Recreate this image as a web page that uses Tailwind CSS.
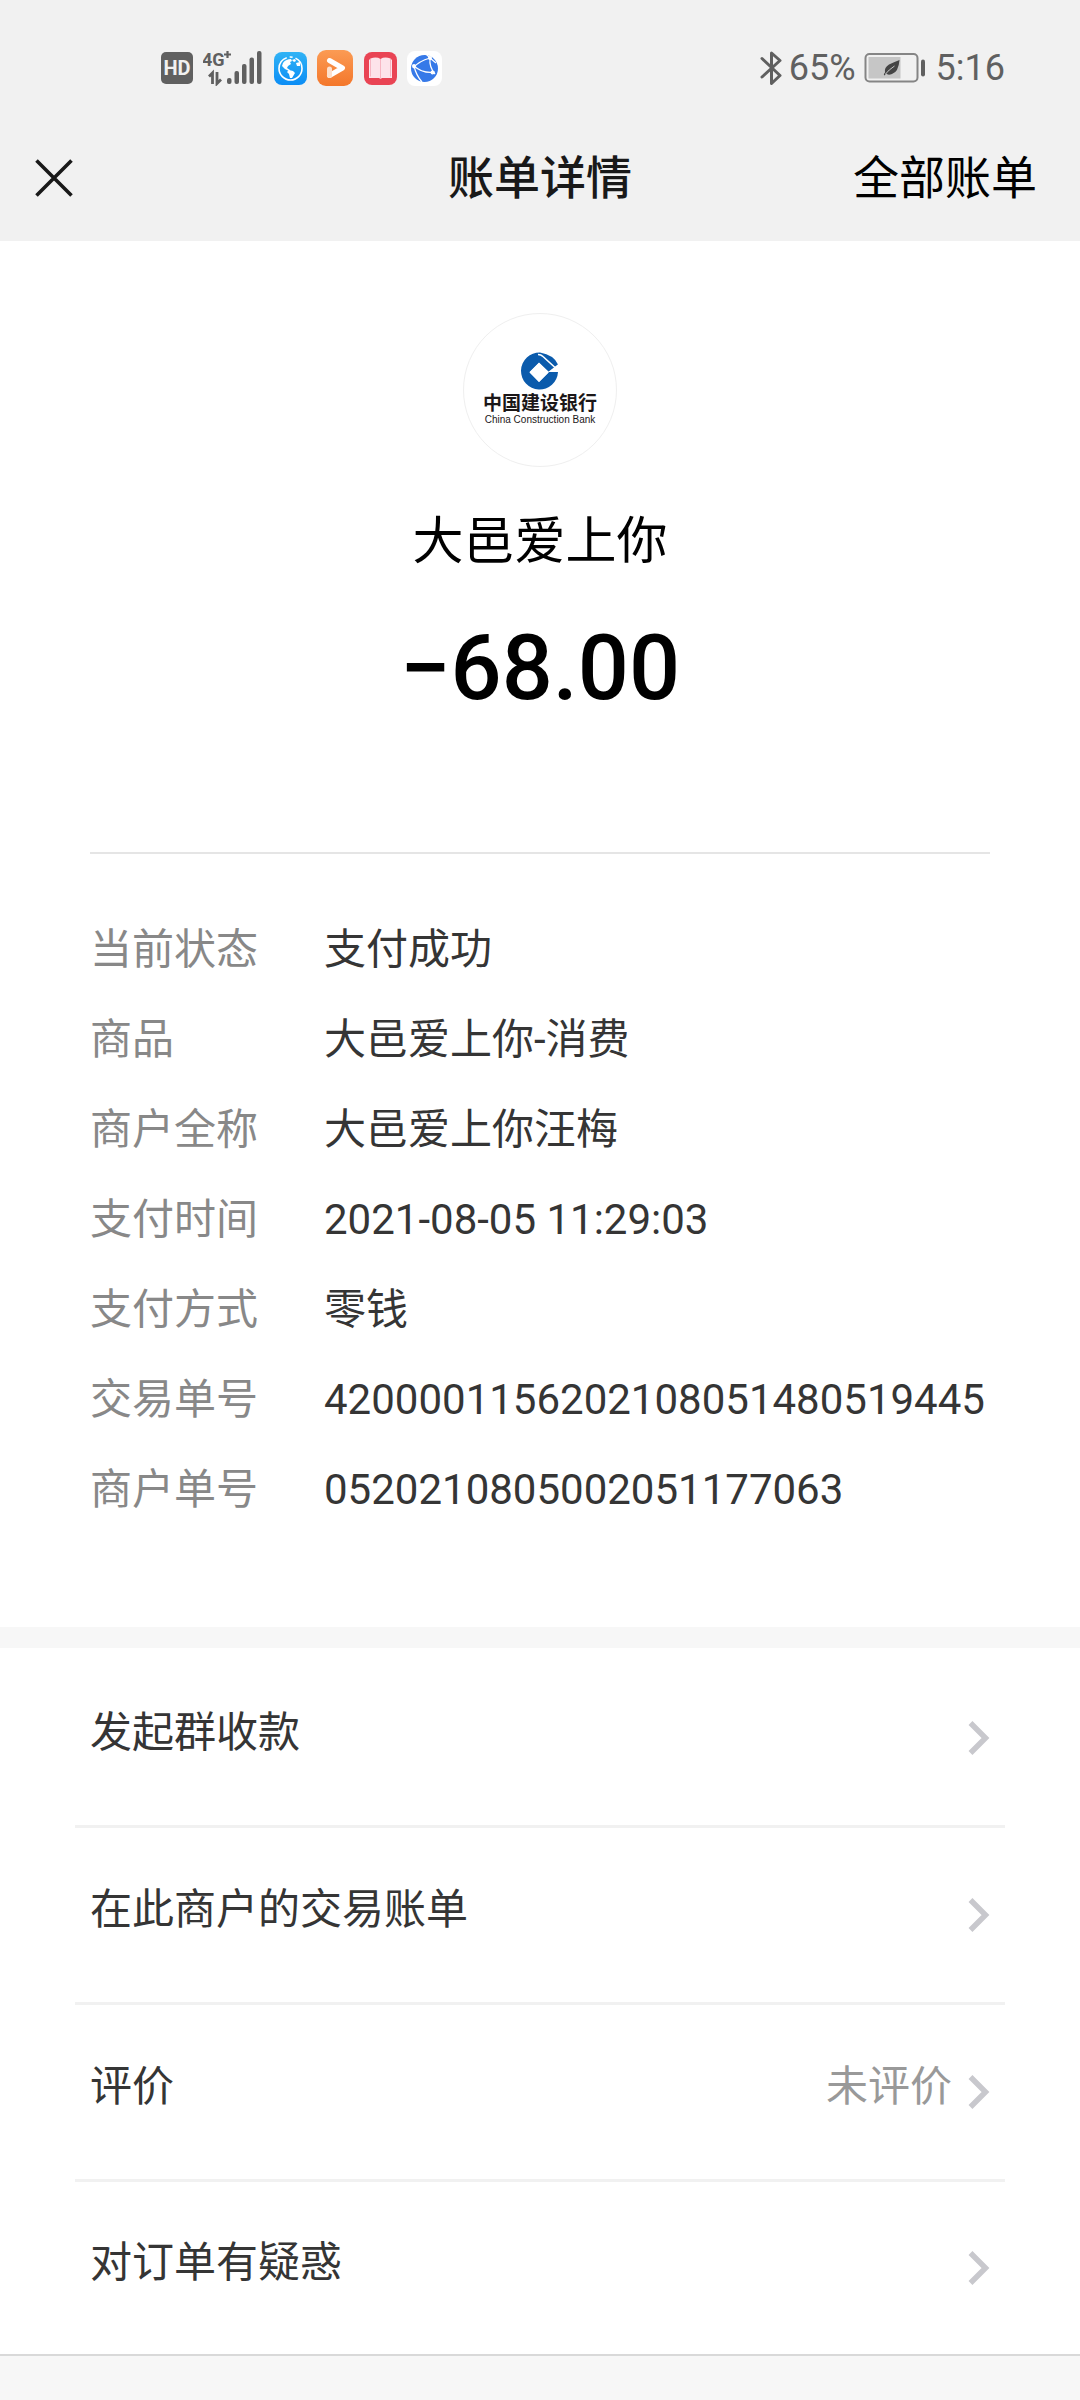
<!DOCTYPE html>
<html lang="zh-CN">
<head>
<meta charset="utf-8">
<meta name="viewport" content="width=device-width, initial-scale=1">
<title>账单详情</title>
<script src="https://cdn.jsdelivr.net/npm/@tailwindcss/browser@4"></script>
</head>
<body class="flex min-h-screen flex-col bg-[#f7f7f7] font-['Roboto','Noto_Sans_CJK_SC',sans-serif] text-[42px] leading-[60px] text-[#353535]">

<header class="bg-[#f1f1f1]">
  <!-- Status bar -->
  <div class="flex h-[116px] items-center justify-between pt-5 pr-[75px] pl-[161px] text-[36px] leading-[40px] text-[#606060]">
    <div class="flex items-center">
      <svg class="h-8 w-8" viewBox="0 0 32 32" role="img" aria-label="HD"><rect width="32" height="32" rx="5" fill="#606060"/><text x="16" y="23" text-anchor="middle" font-family="Roboto" font-size="20" font-weight="700" fill="#f1f1f1">HD</text></svg>
      <svg class="ml-2.5 h-9 w-[60px]" viewBox="0 0 60 36" role="img" aria-label="4G+" fill="#606060"><text x="-1" y="16" font-family="Roboto" font-size="18" font-weight="700">4G</text><path d="M21 4.500h7M24.500 1v7" stroke="#606060" stroke-width="2.200"/><path d="M6 26.500l3.500-3.500v11M14 22v11.500l4-4" fill="none" stroke="#606060" stroke-width="2.800"/><rect x="24" y="28" width="4.500" height="6" rx="2"/><rect x="31.500" y="21" width="4.500" height="13" rx="2"/><rect x="39" y="14" width="4.500" height="20" rx="2"/><rect x="46.500" y="7.500" width="4.500" height="26.500" rx="2"/><rect x="54" y="1" width="4.500" height="33" rx="2"/></svg>
      <svg class="ml-[11px] h-[33px] w-[33px]" viewBox="0 0 33 33" aria-hidden="true"><defs><linearGradient id="sky" x2="0" y2="1"><stop stop-color="#31b3f5"/><stop offset="1" stop-color="#0b8df5"/></linearGradient></defs><rect width="33" height="33" rx="8" fill="url(#sky)"/><circle cx="16.500" cy="16.500" r="11.500" fill="none" stroke="#fff" stroke-width="1.600" stroke-dasharray="50 3 3 3"/><path d="M9 11c2-3 5-4 8-4l1 2-2 1 1 2-3 2-1 2 3 2-1 1-4-2-3-3zM15 18l4 1 2 2-3 5-2 0-1-4-2-2zM22 11l4-1v4l-3 0zM18 8l3-1 1 2-2 1z" fill="#fff"/></svg>
      <svg class="ml-2.5 h-9 w-9" viewBox="0 0 36 36" aria-hidden="true"><defs><linearGradient id="sun" x2="0" y2="1"><stop stop-color="#fb9b54"/><stop offset="1" stop-color="#f4772b"/></linearGradient></defs><rect width="36" height="36" rx="9" fill="url(#sun)"/><path d="M12.500 10.500l13 7.500-13 7.500" fill="none" stroke="#fff" stroke-width="5" stroke-linejoin="round" stroke-linecap="round"/><path d="M12.500 19v6.500" stroke="#fde0cc" stroke-width="5" stroke-linecap="round"/></svg>
      <svg class="ml-[11px] h-[33px] w-[33px]" viewBox="0 0 33 33" aria-hidden="true"><rect width="33" height="33" rx="8" fill="#e94454"/><path d="M5 8l1.500-1.500q6-2 10 .5 4-2.500 10-.5L28 8v18H18q-1.500 1.500-3 0H5z" fill="#fde3ea"/><path d="M16.500 7v19M6.500 7v17.500M26.500 7v17.500" stroke="#f7b5c2" fill="none"/></svg>
      <svg class="ml-2.5 h-[35px] w-[35px]" viewBox="0 0 35 35" aria-hidden="true"><rect width="35" height="35" rx="8" fill="#fff"/><circle cx="17.500" cy="17.500" r="13.500" fill="#3679e8"/><path d="M23 7Q12 10 6 17M23 7q-1 9 5 16M7 15q9 8 21 6M7 15q2 9 8 16M19 3l4 4 6 5" fill="none" stroke="#fff" stroke-width="1.200"/><g fill="#fff"><circle cx="23" cy="7" r="2"/><circle cx="7" cy="15" r="2"/><circle cx="25.500" cy="21.500" r="2"/></g></svg>
    </div>
    <div class="flex items-center">
      <svg class="h-9 w-[23px]" viewBox="0 0 23 36" role="img" aria-label="蓝牙" fill="none" stroke="#606060" stroke-width="3" stroke-linejoin="round" stroke-linecap="round"><path d="M2 8.500l18 17-8.500 8V3l8.500 7.500L2 27"/></svg>
      <span class="ml-1.5">65%</span>
      <svg class="ml-2 h-[30px] w-[62px]" viewBox="0 0 62 30" role="img" aria-label="电池"><rect x="1.500" y="1" width="52" height="27.500" rx="4" fill="none" stroke="#858585" stroke-width="2"/><rect x="4.500" y="4" width="32" height="21.500" fill="#c6c6c6"/><path d="M35.500 7q-1 12-7.500 14-4 1.500-6-.5l-1.500 2q-1.500-1 .5-3-1-5 4-8 4-2 10.500-4.500z" fill="#454545"/><path d="M21.500 21q3-4 9-8" stroke="#c6c6c6" stroke-width="1" fill="none"/><rect x="57" y="6.500" width="4" height="17" rx="2" fill="#606060"/></svg>
      <time class="ml-2.5">5:16</time>
    </div>
  </div>
  <!-- Title bar -->
  <nav class="grid h-[125px] grid-cols-3 items-center px-[35px] pb-0.5 text-[46px] text-black">
    <button type="button" aria-label="关闭" class="w-[38px]"><svg class="h-[38px] w-[38px]" viewBox="0 0 38 38" fill="none" stroke="#191919" stroke-width="3.600"><path d="M1.500 1.500l35 35M36.500 1.500l-35 35"/></svg></button>
    <h1 class="text-center font-medium text-[#191919]">账单详情</h1>
    <a href="#bills" class="justify-self-end pr-2">全部账单</a>
  </nav>
</header>

<main class="bg-white">
  <section class="px-[90px] pb-[107px]">
    <div class="flex flex-col items-center border-b-2 border-[#e5e5e5] pt-[72px] pb-[131px] text-black">
      <div class="flex h-[154px] w-[154px] flex-col items-center rounded-full border border-[#efefef] pt-[38px]">
        <svg class="h-[38px] w-[38px] shrink-0" viewBox="0 0 38 38" aria-hidden="true"><path d="M19 .5A18.500 18.500 0 1 0 37 20H28L18 30 8.500 20 18 10.500 28 20 37 12.500Q33 3 19 .5z" fill="#0b5bac"/><path d="M18 11l9.500 9.500L18 30l-9.500-9.500z" fill="#fff"/><path d="M27 20l10-7.500V20z" fill="#fff"/><path d="M17 2.500q3 0 5 2L34 15.500" stroke="#fff" stroke-width="1.600" fill="none"/></svg>
        <span class="mt-1 text-[19px] leading-5 font-bold whitespace-nowrap text-[#1b1718]">中国建设银行</span>
        <span class="font-['Liberation_Sans',sans-serif] text-[10px] leading-3 whitespace-nowrap text-[#1b1718]">China Construction Bank</span>
      </div>
      <p class="mt-[41px] text-[51px] leading-[68px]">大邑爱上你</p>
      <p class="mt-[41px] text-[90px] leading-[104px] font-medium">−68.00</p>
    </div>

    <dl class="grid grid-cols-[234px_1fr] gap-y-[30px] pt-[66px] [&>dt]:text-[#888888]">
      <dt>当前状态</dt><dd>支付成功</dd>
      <dt>商品</dt><dd>大邑爱上你-消费</dd>
      <dt>商户全称</dt><dd>大邑爱上你汪梅</dd>
      <dt>支付时间</dt><dd>2021-08-05 11:29:03</dd>
      <dt>支付方式</dt><dd>零钱</dd>
      <dt>交易单号</dt><dd>4200001156202108051480519445</dd>
      <dt>商户单号</dt><dd>0520210805002051177063</dd>
    </dl>
  </section>

  <ul class="border-t-[21px] border-b-2 border-t-[#f7f7f7] border-b-[#d9d9d9] px-[75px] pt-[3px]">
    <li class="border-b-[3px] border-[#f1f1f1]">
      <a href="#collect" class="flex h-[174px] items-center justify-between px-[15px]"><span class="pb-2.5">发起群收款</span>
        <svg class="h-9 w-[22px]" viewBox="0 0 22 36" fill="none" stroke="#c8c8cd" stroke-width="5.500" aria-hidden="true"><path d="M2.500 3l15 15-15 15"/></svg></a>
    </li>
    <li class="border-b-[3px] border-[#f1f1f1]">
      <a href="#merchant-bills" class="flex h-[174px] items-center justify-between px-[15px]"><span class="pb-2.5">在此商户的交易账单</span>
        <svg class="h-9 w-[22px]" viewBox="0 0 22 36" fill="none" stroke="#c8c8cd" stroke-width="5.500" aria-hidden="true"><path d="M2.500 3l15 15-15 15"/></svg></a>
    </li>
    <li class="border-b-[3px] border-[#f1f1f1]">
      <a href="#review" class="flex h-[174px] items-center px-[15px]"><span class="flex-1 pb-2.5">评价</span><span class="pr-4 pb-2.5 text-[#999999]">未评价</span>
        <svg class="h-9 w-[22px]" viewBox="0 0 22 36" fill="none" stroke="#c8c8cd" stroke-width="5.500" aria-hidden="true"><path d="M2.500 3l15 15-15 15"/></svg></a>
    </li>
    <li>
      <a href="#help" class="flex h-[172px] items-center justify-between px-[15px]"><span class="pb-2.5">对订单有疑惑</span>
        <svg class="h-9 w-[22px]" viewBox="0 0 22 36" fill="none" stroke="#c8c8cd" stroke-width="5.500" aria-hidden="true"><path d="M2.500 3l15 15-15 15"/></svg></a>
    </li>
  </ul>
</main>
</body>
</html>
